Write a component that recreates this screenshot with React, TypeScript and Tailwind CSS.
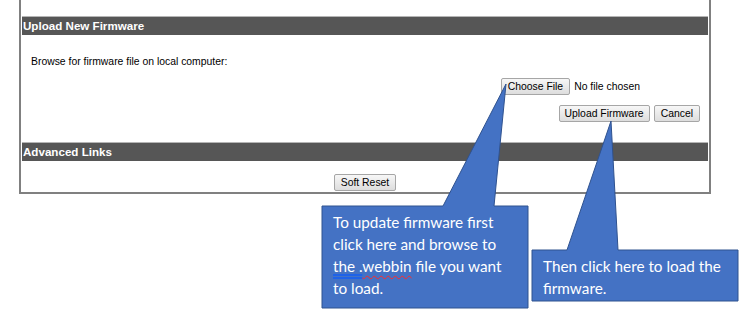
import React from 'react';

const btn =
  'h-[17px] rounded-[2px] border border-[#a6a6a6] bg-gradient-to-b from-[#f7f7f7] to-[#dddddd] px-[6px] text-[10.4px] leading-[15px] text-black';

function SectionHeader({ title }: { title: string }) {
  return (
    <div className="h-[19px] border-t border-[#b5b5b5] bg-[#565656] pl-[1px] text-[11.6px] font-bold leading-[18px] text-white">
      {title}
    </div>
  );
}

function Callout({
  points,
  box,
  children,
}: {
  points: string;
  box: string;
  children: React.ReactNode;
}) {
  return (
    <>
      <svg className="pointer-events-none absolute left-0 top-0" width="756" height="320">
        <polygon points={points} fill="#4472c4" stroke="#2f528f" strokeWidth="1" />
      </svg>
      <div
        className={`absolute pl-[11px] pt-[5px] text-[15.3px] leading-[22px] text-white ${box}`}
        style={{ fontFamily: 'Lato, "Open Sans", sans-serif' }}
      >
        {children}
      </div>
    </>
  );
}

export default function App() {
  return (
    <div
      className="relative h-[320px] w-[756px] overflow-hidden bg-white"
      style={{ fontFamily: '"Liberation Sans", Arial, sans-serif' }}
    >
      <div className="ml-[19px] w-[692px] border-x-2 border-b-2 border-[#808080] px-[1px] pt-[16px] pb-[1px]">
        <SectionHeader title="Upload New Firmware" />
        <div className="mt-[20px] pl-[9px] text-[10.4px] leading-[13px] text-black">
          Browse for firmware file on local computer:
        </div>
        <div className="mt-[10px] flex items-center justify-end pr-[68px]">
          <button className={btn}>Choose File</button>
          <span className="ml-[4px] text-[10.4px] text-black">No file chosen</span>
        </div>
        <div className="mt-[10px] flex justify-end gap-[4px] pr-[8px]">
          <button className={`${btn} !px-[5px]`}>Upload Firmware</button>
          <button className={btn}>Cancel</button>
        </div>
        <div className="mt-[20px]">
          <SectionHeader title="Advanced Links" />
        </div>
        <div className="mt-[13px] flex justify-center">
          <button className={btn}>Soft Reset</button>
        </div>
      </div>

      <Callout
        points="322,206 443,206 506,84 494,206 528,206 528,308 322,308"
        box="left-[322px] top-[206px] w-[206px]"
      >
        To update firmware first
        <br />
        click here and browse to
        <br />
        <span className="underline decoration-double decoration-2 decoration-[#1f63e8] underline-offset-[2px]">
          the .
        </span>
        <span className="underline decoration-wavy decoration-[#ff2a2a] decoration-1 underline-offset-[3px]">
          webbin
        </span>{' '}
        file you want
        <br />
        to load.
      </Callout>

      <Callout
        points="532,250 567,250 611,121 618,250 738,250 738,301 532,301"
        box="left-[532px] top-[250px] w-[206px]"
      >
        Then click here to load the
        <br />
        firmware.
      </Callout>
    </div>
  );
}
